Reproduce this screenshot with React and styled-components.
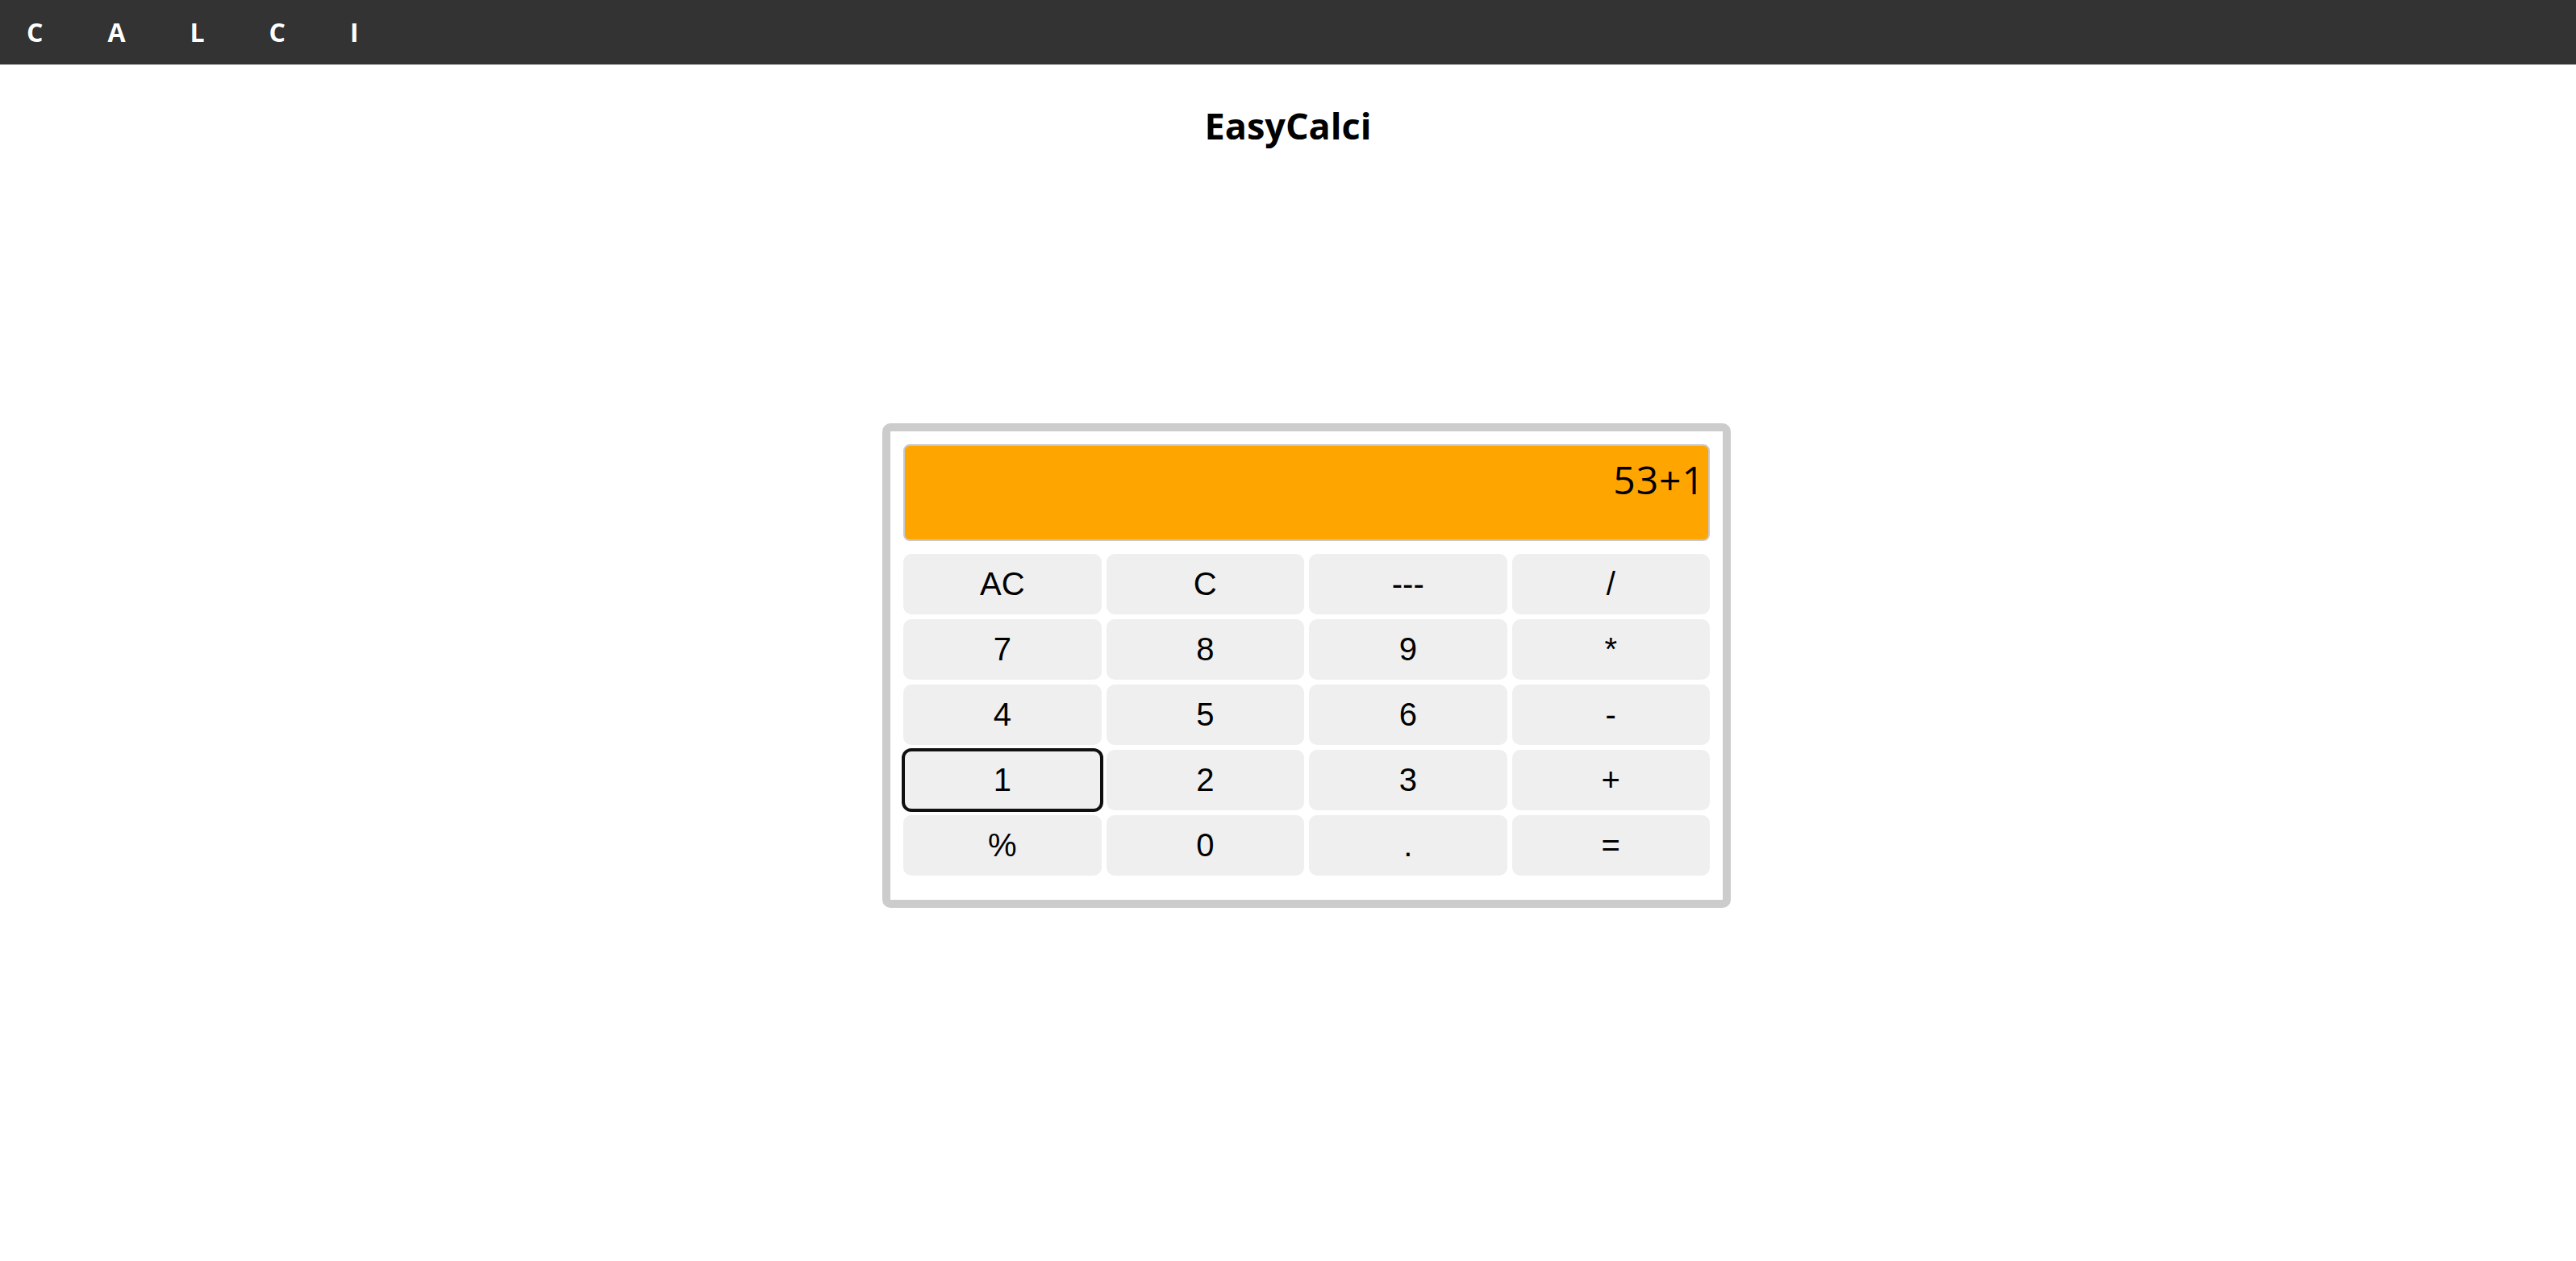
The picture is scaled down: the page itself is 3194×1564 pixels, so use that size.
import React from "react";
import styled, { createGlobalStyle } from "styled-components";

const GlobalStyle = createGlobalStyle`
  html, body {
    margin: 0;
    padding: 0;
    background: #ffffff;
  }
  body {
    font-family: "Open Sans", "Noto Sans", sans-serif;
  }
`;

const NavBar = styled.nav`
  height: 80px;
  background: #333333;
  display: flex;
  align-items: center;
  padding-left: 33px;
  box-sizing: border-box;
`;

const NavBrand = styled.span`
  font-family: "Open Sans", "Noto Sans", sans-serif;
  font-weight: 700;
  font-size: 32px;
  letter-spacing: 80px;
  color: #ffffff;
  line-height: 1;
`;

const Main = styled.main`
  display: flex;
  flex-direction: column;
  align-items: center;
`;

const Title = styled.h3`
  margin: 46px 0 0;
  font-family: "Open Sans", "Noto Sans", sans-serif;
  font-weight: 700;
  font-size: 45px;
  line-height: 60px;
  color: #000000;
  text-align: center;
`;

const Calculator = styled.div`
  margin: 339px 0 0 46px;
  width: 1052px;
  box-sizing: border-box;
  border: 10px solid #cccccc;
  border-radius: 10px;
  padding: 16px 16px 30px 16px;
  background: #ffffff;
  display: flex;
  flex-direction: column;
  gap: 16px;
`;

const Display = styled.div`
  height: 120px;
  box-sizing: border-box;
  background: #ffa500;
  border: 2px solid #c8c8c8;
  border-radius: 8px;
  padding: 10px 4px 0 0;
  text-align: right;
  font-family: "Open Sans", "Noto Sans", sans-serif;
  font-weight: 400;
  font-size: 48px;
  line-height: 64px;
  letter-spacing: 1px;
  color: #000000;
`;

const Keypad = styled.div`
  display: grid;
  grid-template-columns: repeat(4, 1fr);
  grid-auto-rows: 75px;
  gap: 6px;
`;

const Key = styled.button`
  border: none;
  border-radius: 10px;
  background: #efefef;
  font-family: "Liberation Sans", Arial, sans-serif;
  font-size: 40px;
  color: #000000;
  padding: 0;
  cursor: pointer;
  outline: ${(p) => (p.$focused ? "4px solid #101010" : "none")};
  outline-offset: -2px;
`;

const keys = [
  "AC", "C", "---", "/",
  "7", "8", "9", "*",
  "4", "5", "6", "-",
  "1", "2", "3", "+",
  "%", "0", ".", "=",
];

export default function App() {
  return (
    <>
      <GlobalStyle />
      <NavBar>
        <NavBrand>CALCI</NavBrand>
      </NavBar>
      <Main>
        <Title>EasyCalci</Title>
        <Calculator>
          <Display>53+1</Display>
          <Keypad>
            {keys.map((k) => (
              <Key key={k} $focused={k === "1"}>
                {k}
              </Key>
            ))}
          </Keypad>
        </Calculator>
      </Main>
    </>
  );
}
